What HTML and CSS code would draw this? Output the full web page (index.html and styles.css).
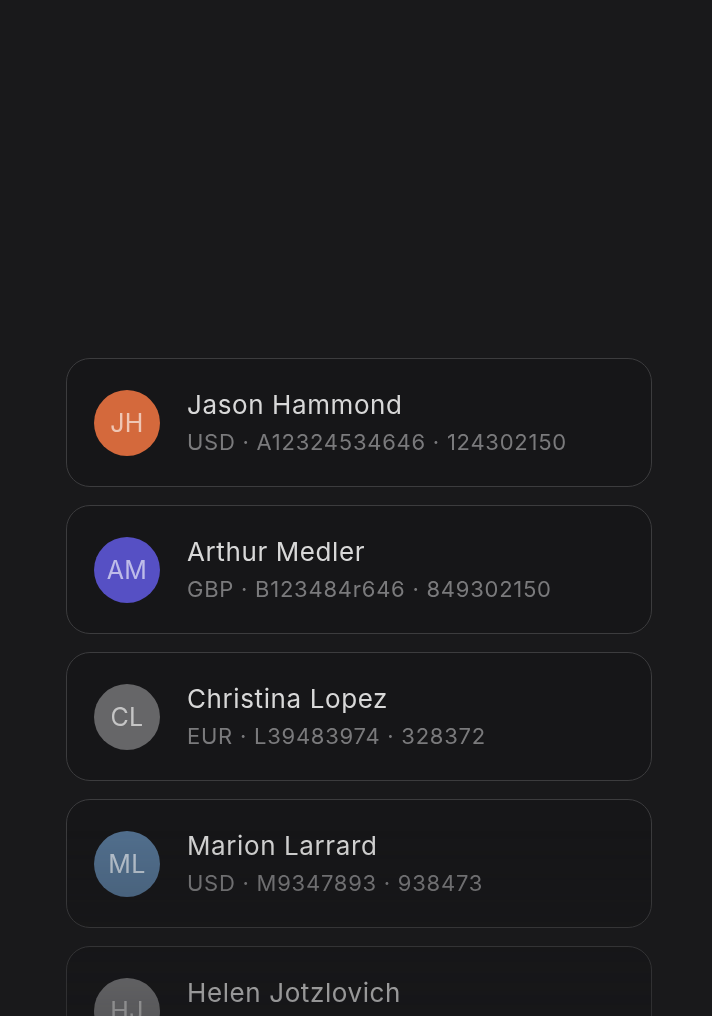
FILE: index.html
```html
<!DOCTYPE html>
<html lang="en">
<head>
    <meta charset="UTF-8">
    <meta name="viewport" content="width=device-width, initial-scale=1.0">
    <title>Accounts</title>
    <link rel="stylesheet" href="styles.css">
</head>
<body>
    <div class="list">
        <div class="card">
            <div class="avatar orange">JH</div>
            <div class="info">
                <div class="name">Jason Hammond</div>
                <div class="meta">USD · A12324534646 · 124302150</div>
            </div>
        </div>
        <div class="card">
            <div class="avatar purple">AM</div>
            <div class="info">
                <div class="name">Arthur Medler</div>
                <div class="meta">GBP · B123484r646 · 849302150</div>
            </div>
        </div>
        <div class="card">
            <div class="avatar gray">CL</div>
            <div class="info">
                <div class="name">Christina Lopez</div>
                <div class="meta">EUR · L39483974 · 328372</div>
            </div>
        </div>
        <div class="card">
            <div class="avatar blue">ML</div>
            <div class="info">
                <div class="name">Marion Larrard</div>
                <div class="meta">USD · M9347893 · 938473</div>
            </div>
        </div>
        <div class="card">
            <div class="avatar light">HJ</div>
            <div class="info">
                <div class="name">Helen Jotzlovich</div>
                <div class="meta">USD · H2390485 · 203948</div>
            </div>
        </div>
    </div>
</body>
</html>
```

FILE: styles.css
```css
body {
    font-family: 'Inter', 'Noto Sans', sans-serif;
    background: #19191b;
    margin: 0;
    padding: 0;
    height: 1016px;
    overflow: hidden;
}
.list {
    display: flex;
    flex-direction: column;
    gap: 18px;
    width: 586px;
    margin-left: 66px;
    padding-top: 358px;
    -webkit-mask-image: linear-gradient(180deg, #000 0, #000 820px, rgba(0, 0, 0, 0.62) 1016px);
    mask-image: linear-gradient(180deg, #000 0, #000 820px, rgba(0, 0, 0, 0.62) 1016px);
}
.card {
    box-sizing: border-box;
    height: 129px;
    display: flex;
    align-items: center;
    gap: 27px;
    padding: 0 27px;
    background: #161618;
    border: 1.5px solid #3c3c3e;
    border-radius: 24px;
}
.avatar {
    width: 66px;
    height: 66px;
    flex-shrink: 0;
    border-radius: 50%;
    display: flex;
    align-items: center;
    justify-content: center;
    font-size: 25px;
    letter-spacing: 0.3px;
    color: rgba(255, 255, 255, 0.62);
}
.orange { background: #d4693c; }
.purple { background: #5650c4; }
.gray { background: #666668; }
.blue { background: #52708f; }
.light { background: #808082; }
.info {
    display: flex;
    flex-direction: column;
    gap: 7px;
}
.name {
    font-size: 26px;
    line-height: 32px;
    letter-spacing: 0.6px;
    color: #d8d8d8;
}
.meta {
    font-size: 22px;
    line-height: 28px;
    letter-spacing: 0.75px;
    color: #7a7a7c;
}
```
